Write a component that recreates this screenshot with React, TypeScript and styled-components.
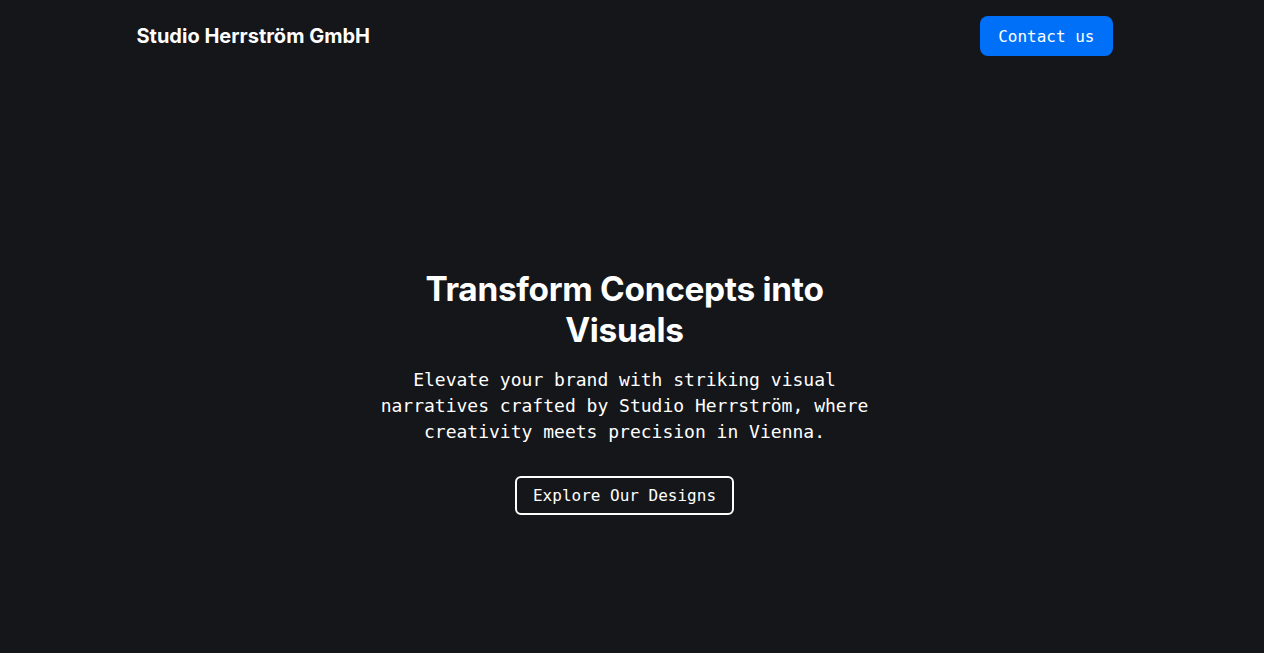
import React from "react";
import styled, { createGlobalStyle } from "styled-components";

const GlobalStyle = createGlobalStyle`
  * {
    box-sizing: border-box;
  }

  body {
    margin: 0;
    /* keeps the layout width of the reference, which had a 15px scrollbar */
    padding-right: 15px;
    background-color: #151619;
    color: #ffffff;
    font-family: "DejaVu Sans Mono", "Liberation Mono", monospace;
  }
`;

const sans = `"Inter", "Noto Sans", "Liberation Sans", sans-serif`;
const mono = `"DejaVu Sans Mono", "Liberation Mono", monospace`;

const Container = styled.div`
  max-width: 1024px;
  margin: 0 auto;
  padding: 0 24px;
`;

const Header = styled.header`
  display: flex;
  align-items: center;
  justify-content: space-between;
  height: 72px;
`;

const Logo = styled.a`
  font-family: ${sans};
  font-size: 20px;
  font-weight: 700;
  color: #ffffff;
  text-decoration: none;
`;

const ContactButton = styled.button`
  height: 40px;
  padding: 0 18px;
  border: none;
  border-radius: 8px;
  background-color: #0070f9;
  color: #ffffff;
  font-family: ${mono};
  font-size: 16px;
  cursor: pointer;
`;

const Hero = styled.section`
  display: flex;
  flex-direction: column;
  align-items: center;
  justify-content: center;
  min-height: calc(100vh - 14px);
  text-align: center;
`;

const Title = styled.h1`
  max-width: 460px;
  margin: 0 0 16px;
  font-family: ${sans};
  font-size: 33.4px;
  font-weight: 700;
  line-height: 41px;
  letter-spacing: -0.3px;
`;

const Lead = styled.p`
  max-width: 490px;
  margin: 0 0 31px;
  font-family: ${mono};
  font-size: 18px;
  line-height: 26px;
`;

const OutlineButton = styled.button`
  height: 39px;
  padding: 0 16px;
  border: 2px solid #ffffff;
  border-radius: 6px;
  background: none;
  color: #ffffff;
  font-family: ${mono};
  font-size: 16px;
  cursor: pointer;
`;

export default function App(): JSX.Element {
  return (
    <>
      <GlobalStyle />
      <Container>
        <Header>
          <Logo href="#">Studio Herrström GmbH</Logo>
          <ContactButton>Contact us</ContactButton>
        </Header>

        <Hero>
          <Title>Transform Concepts into Visuals</Title>
          <Lead>
            Elevate your brand with striking visual narratives crafted by Studio
            Herrström, where creativity meets precision in Vienna.
          </Lead>
          <OutlineButton>Explore Our Designs</OutlineButton>
        </Hero>
      </Container>
    </>
  );
}
